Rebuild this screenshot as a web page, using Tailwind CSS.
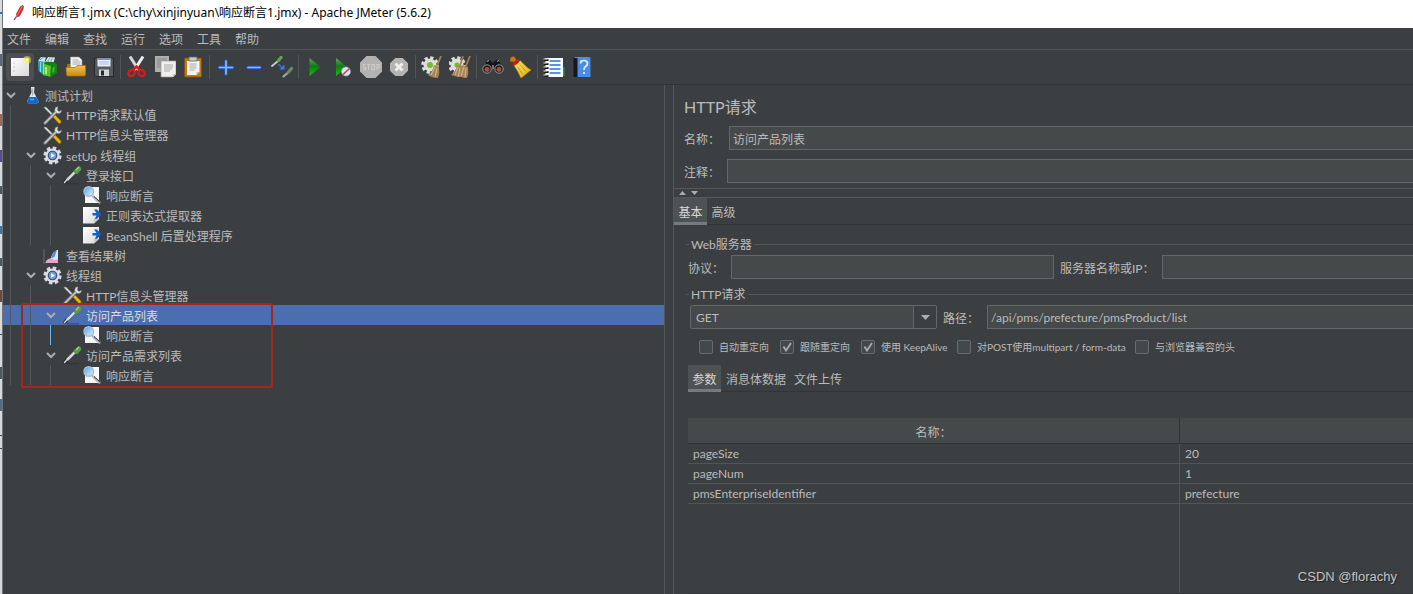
<!DOCTYPE html>
<html lang="zh-CN">
<head>
<meta charset="utf-8">
<meta name="viewport" content="width=device-width, initial-scale=1">
<title>响应断言1.jmx - Apache JMeter (5.6.2)</title>
<script src="https://cdn.jsdelivr.net/npm/@tailwindcss/browser@4"></script>
</head>
<body class="relative flex h-screen overflow-hidden bg-[#3c3f41] font-['Lato','Noto_Sans_CJK_SC',sans-serif] text-xs text-[#bbbbbb]">

<svg width="0" height="0" class="absolute" aria-hidden="true">
  <defs>
    <linearGradient id="gGreen" x1="0" y1="0" x2="0" y2="1"><stop offset="0" stop-color="#5fa860"/><stop offset=".45" stop-color="#0f7a12"/><stop offset="1" stop-color="#10c410"/></linearGradient>
    <linearGradient id="gFolder" x1="0" y1="0" x2="0" y2="1"><stop offset="0" stop-color="#f2c25a"/><stop offset="1" stop-color="#c98a12"/></linearGradient>
    <linearGradient id="gPaper" x1="0" y1="0" x2="1" y2="1"><stop offset="0" stop-color="#ffffff"/><stop offset="1" stop-color="#d9d9d6"/></linearGradient>
    <linearGradient id="gBroom" x1="0" y1="0" x2="1" y2="1"><stop offset="0" stop-color="#fff07a"/><stop offset="1" stop-color="#d9a800"/></linearGradient>
    <linearGradient id="gLens" x1="0" y1="0" x2="1" y2="1"><stop offset="0" stop-color="#4fa0e8"/><stop offset="1" stop-color="#e2f5ff"/></linearGradient>
    <symbol id="chev" viewBox="0 0 10 8"><path d="M1 2l4 4 4-4" fill="none" stroke="#adadad" stroke-width="2"/></symbol>
    <symbol id="flask" viewBox="0 0 20 20"><path d="M8 2h3.500L11 7.500l4.500 9q.5 1.800-1.500 1.800H5.500q-2 0-1.500-1.800L8.500 7.500z" fill="#e4e9ef"/><path d="M6.300 12h6.900l2.300 4.700q.2 1.600-1.500 1.600H5.500q-1.700 0-1.500-1.600z" fill="#0f67d0"/><path d="M7 14.500h4" stroke="#5aa0ee" stroke-width="1.500"/><path d="M9.700 3.500v7" stroke="#9ba6b0"/></symbol>
    <symbol id="tools" viewBox="0 0 20 20"><g transform="translate(0 1)"><path d="M1 1.500l2-.3L10.500 9l-1 1z" fill="#e8e8e8" stroke="#bfbfbf" stroke-width=".5"/><path d="M10 11l2-2 6 6.200q.3 2.300-2 2.300z" fill="#f2b800" stroke="#a87d00" stroke-width=".5"/><path d="M2 17L13 6" stroke="#707272" stroke-width="3.200" stroke-linecap="round"/><path d="M2 17L13 6" stroke="#c9caca" stroke-width="1.600" stroke-linecap="round"/><path d="M15 .8q-3.500.2-3.200 4l2.800 2.700q3.600.3 3.900-3.200l-2.500 1.300-1.800-1.600z" fill="#e1e1e1" stroke="#8c8c8c" stroke-width=".5"/></g></symbol>
    <symbol id="gear" viewBox="0 0 20 20"><g transform="translate(0 1)"><circle cx="9.500" cy="9.500" r="7.600" fill="none" stroke="#d7dade" stroke-width="3" stroke-dasharray="3.500 2.469"/><circle cx="9.500" cy="9.500" r="7" fill="#dcdfe3"/><circle cx="9.500" cy="9.500" r="4.800" fill="#2d4f83"/><circle cx="9.500" cy="9.500" r="3.700" fill="#7298d0"/><path d="M8 7l4 2.500-4 2.500z" fill="#fff"/></g></symbol>
    <symbol id="dropper" viewBox="0 0 20 20"><path d="M4 18.800h12" stroke="#2a2c2d" stroke-width="1" opacity=".6"/><path d="M2 17L12 7" stroke="#25282a" stroke-width="3.400" stroke-linecap="round"/><path d="M1.500 17.500L4 14.800" stroke="#ddd" stroke-width="1.400" stroke-linecap="round"/><path d="M4 15L12 7" stroke="#d3d7d7" stroke-width="2.600"/><path d="M11 5l4 4" stroke="#45763d" stroke-width="2.200"/><path d="M13.300 6.500L16 3.800" stroke="#579a48" stroke-width="4.600" stroke-linecap="round"/><path d="M13 5l3-3" stroke="#9fd48f" stroke-width="1.200"/></symbol>
    <symbol id="assert" viewBox="0 0 20 20"><g transform="translate(0 1)"><path d="M2 1h14v16H2z" fill="#f7f7f7"/><path d="M10 10.500l6.500 6" stroke="#b4b7bb" stroke-width="2.500" stroke-linecap="round"/><path d="M11 10.500l6.500 6" stroke="#32373c" stroke-width="1"/><circle cx="5.800" cy="5.500" r="4.800" fill="url(#gLens)" stroke="#a9bccb" stroke-width="1.400"/></g></symbol>
    <symbol id="post" viewBox="0 0 20 20"><path d="M0 2h16v12l-5 4.500H0z" fill="url(#gPaper)"/><path d="M11 18.500v-5h5z" fill="#c6c8c9"/><path d="M9.500 8h4L11 4.500h3l4.500 4.700-4.500 4.600h-2.200l1.700-3.300h-4z" fill="#1260c4"/></symbol>
    <symbol id="chart" viewBox="0 0 20 20"><g transform="translate(-1 1)"><path d="M2 3v15" stroke="#6b6e70"/><path d="M3.500 17l1.500-3 5-2.500 2 1 4-4v8.500z" fill="#f2a1dc"/><path d="M9 14q0-7 6-10h1v10z" fill="#dceaff"/><path d="M9.500 12q1-6 5.500-8l-2.500 7z" fill="#4c8de8"/><path d="M3.500 17l1.500-3 5-2 2 2 4-1v4z" fill="#ef9eda"/></g></symbol>

    <symbol id="t-new" viewBox="0 0 22 22"><path d="M2 2h18v18H2z" fill="url(#gPaper)"/><path d="M4.500 7h1M4.500 11h1M4.500 15h1" stroke="#999"/><circle cx="18" cy="4" r="4" fill="#fff36b" opacity=".5"/><circle cx="18" cy="4" r="2.400" fill="#f9e94a"/><circle cx="18" cy="4" r="1" fill="#fff"/></symbol>
    <symbol id="t-tpl" viewBox="0 0 22 22"><path d="M1 5l9 1v14l-3-.5L1.500 15z" fill="#2aa3b8"/><path d="M3.500 6v10M6.500 6.500v12" stroke="#8adbe8"/><path d="M1 5l3-4 5 .5L7.500 6z" fill="#cfe3ea"/><path d="M3 4l3-2.500" stroke="#4aa0b8"/><path d="M8 6l3-5 7 .5-1.500 5z" fill="#dbe9ee"/><path d="M11 5l2-3.500M14 5l1.500-3.500" stroke="#5babbf"/><path d="M7 8l2-2.500 8 .5 2.500 3-6 1z" fill="#167c1a"/><path d="M7 8l7 2-.5 11L7 19z" fill="#4fca24"/><path d="M9 11v7" stroke="#c4f2a6" stroke-width="1.500"/><path d="M14 10l3.500-4 2.500 3v8l-6.500 4z" fill="#12860f"/><path d="M15.500 12l2-1.500v5l-2 1.500z" fill="#45b632"/></symbol>
    <symbol id="t-open" viewBox="0 0 22 22"><path d="M2 8h4l1-1h9v12H2z" fill="#a8710d"/><path d="M5.500 1h8.500l3 3v8H5.500z" fill="#f4f4f4" stroke="#999" stroke-width=".6"/><path d="M7.500 4h6M7.500 6h8M7.500 8h8" stroke="#9a9a9a" stroke-width=".8"/><path d="M1 11.500h9l2-2h8.500v9q0 1.500-1.500 1.500H3q-1.500 0-1.500-1.500z" fill="url(#gFolder)" stroke="#aa760c" stroke-width=".7"/></symbol>
    <symbol id="t-save" viewBox="0 0 22 22"><path d="M1.500 2H20l.5 1v17.500H3l-1.500-1.500z" fill="#565b60" stroke="#25282b"/><path d="M4.500 2h13v8.500h-13z" fill="#e7eef6"/><path d="M4.500 2h13v2h-13z" fill="#7893b5"/><path d="M6 6h10M6 8h10" stroke="#a4bcd6" stroke-width=".9"/><path d="M6 13.500h10v6.500H6z" fill="#d2d4d5"/><path d="M8 14.500h3v5H8z" fill="#25282b"/></symbol>
    <symbol id="t-cut" viewBox="0 0 22 22"><path d="M4 .5L12.500 14" stroke="#d8dada" stroke-width="3"/><path d="M17 .5L8.500 14" stroke="#f1f1f1" stroke-width="3"/><path d="M7.500 13.500l3-3 3 3" stroke="#d81b1b" stroke-width="2.600" fill="none"/><ellipse cx="5.500" cy="17" rx="3.400" ry="2.900" fill="none" stroke="#dc1919" stroke-width="2.400" transform="rotate(-35 5.500 17)"/><ellipse cx="15.500" cy="17" rx="3.400" ry="2.900" fill="none" stroke="#dc1919" stroke-width="2.400" transform="rotate(35 15.500 17)"/></symbol>
    <symbol id="t-copy" viewBox="0 0 22 22"><path d="M1 0h14v16H1z" fill="#aeb0b0"/><path d="M3 3h10M3 5h10M3 7h7M3 9h7M3 11h7" stroke="#858787"/><path d="M7 5h15v13l-3 3H7z" fill="#f0f0ee" stroke="#999" stroke-width=".7"/><path d="M10 9h9M10 11h9M10 13h8M10 15h6" stroke="#a8a8a8"/><path d="M19 21v-3h3z" fill="#c8c8c8"/></symbol>
    <symbol id="t-paste" viewBox="0 0 22 22"><rect x="2.500" y="2" width="17" height="19" rx="1" fill="#bd7a16" stroke="#7e4e08" stroke-width=".7"/><path d="M5 5h12.500v11l-3 3H5z" fill="#f3f3f1"/><path d="M7 1h8v4H7z" fill="#c9cbc8" stroke="#666" stroke-width=".8"/><path d="M7.500 8h7M7.500 10h7M7.500 12h7M7.500 14h5" stroke="#aaa"/><path d="M14.500 19v-3h3z" fill="#bbb"/></symbol>
    <symbol id="t-plus" viewBox="0 0 22 22"><path d="M11 5v13M4.500 11.500h13" stroke="#1f61bd" stroke-width="3.400" stroke-linecap="round"/><path d="M11 5v13M4.500 11.500h13" stroke="#8cbcf4" stroke-width="1.600" stroke-linecap="round"/></symbol>
    <symbol id="t-minus" viewBox="0 0 22 22"><path d="M5 11.500h12" stroke="#1f61bd" stroke-width="3.400" stroke-linecap="round"/><path d="M5 11.500h12" stroke="#8cbcf4" stroke-width="1.600" stroke-linecap="round"/></symbol>
    <symbol id="t-toggle" viewBox="0 0 22 22"><path d="M1 10L7 5" stroke="#c9cdcb" stroke-width="1.800" stroke-linecap="round"/><path d="M7.500 4.500l2.500-3" stroke="#5ca84a" stroke-width="3.200" stroke-linecap="round"/><path d="M7 8l4.500 4" stroke="#3473d8" stroke-width="1.600"/><path d="M13.500 8.500v5H8.500z" fill="#3c7ce0"/><path d="M12.500 20.500l4-3.500" stroke="#a3a9a1" stroke-width="2.200" stroke-linecap="round"/><path d="M17.500 16l3-3.500" stroke="#6d8a66" stroke-width="3.200" stroke-linecap="round"/></symbol>
    <symbol id="t-play" viewBox="0 0 22 22"><path d="M5.500 2l11 9-11 9z" fill="url(#gGreen)"/></symbol>
    <symbol id="t-playno" viewBox="0 0 22 22"><path d="M4 2l11 9-11 9z" fill="url(#gGreen)"/><circle cx="14" cy="15.500" r="4.500" fill="#d9e9fb" stroke="#8aa8cc" stroke-width=".6"/><path d="M11 18.500l6.500-6" stroke="#dc3b3b" stroke-width="1.700"/></symbol>
    <symbol id="t-stop" viewBox="0 0 22 22"><path d="M6.500 0h9L22 6.500v9L15.500 22h-9L0 15.500v-9z" fill="#b2b2b2"/><path d="M5.500 8.500H3.300v2.700h2.200v2.600H3M7 8.500h3.500M8.700 8.500v5.500M12 8.500h2.500v5.300H12zM17 14V8.500h2.300v3H17" fill="none" stroke="#cccccc" stroke-width="1.100"/></symbol>
    <symbol id="t-shut" viewBox="0 0 22 22"><path d="M7.300 2h7.400L20 7.300v7.400L14.700 20H7.300L2 14.700V7.300z" fill="#b4b4b4"/><path d="M7.500 7.500l7 7M14.500 7.500l-7 7" stroke="#eeeeee" stroke-width="3"/></symbol>
    <symbol id="t-clear" viewBox="0 0 22 22"><circle cx="9" cy="9" r="7.300" fill="none" stroke="#dcdedb" stroke-width="3" stroke-dasharray="3.200 2.533"/><circle cx="9" cy="9" r="6.500" fill="#dcdedb"/><circle cx="9" cy="9" r="3" fill="#73bd1f"/><path d="M20 0l-4 10" stroke="#a57e50" stroke-width="1.800"/><path d="M13 9l5 2q1 6-1 11-6 0-10-3 5-4 6-10z" fill="#a88358"/><path d="M14 11l-4 8M16 12l-2 9" stroke="#d6bc91"/></symbol>
    <symbol id="t-clearall" viewBox="0 0 22 22"><circle cx="8" cy="9" r="7.300" fill="none" stroke="#dcdedb" stroke-width="3" stroke-dasharray="3.200 2.533"/><circle cx="8" cy="9" r="6.500" fill="#dcdedb"/><circle cx="8" cy="9" r="2.500" fill="#73bd1f"/><path d="M14 0l-3 10M21 0l-4 10" stroke="#a57e50" stroke-width="1.700"/><path d="M8 9l4 1 2-1 5 2q1 6-1 11-4 0-6-1-5 0-10-2 5-4 6-10z" fill="#a88358"/><path d="M9 11l-3 8M11 12l-2 9M15 11l-3 9M17 12l-1 9" stroke="#d6bc91"/></symbol>
    <symbol id="t-find" viewBox="0 0 22 22"><path d="M1 13L5 5q2-2 4 0l2 2 2-2q2-2 4 0l4 8z" fill="#151515"/><path d="M5 5.500l2-1M15 5.500l2-1" stroke="#aaa"/><circle cx="5" cy="13" r="4.200" fill="#202020" stroke="#99958d" stroke-width="1"/><circle cx="17" cy="13" r="4.200" fill="#202020" stroke="#99958d" stroke-width="1"/><circle cx="5" cy="13.500" r="2.400" fill="#a45234"/><circle cx="17" cy="13.500" r="2.400" fill="#a45234"/><path d="M10 9h2v4h-2z" fill="#777"/></symbol>
    <symbol id="t-broom" viewBox="0 0 22 22"><path d="M0 3q1-3 4-2.500L6.500 4l-2 2L0 5.500z" fill="#c97a20" stroke="#965308" stroke-width=".7"/><path d="M4 9.500q4-1 6-5l5 5q3 3 6 4.500L11 22Q8 15 4 9.500z" fill="url(#gBroom)" stroke="#ba9108" stroke-width=".6"/><path d="M3 9L9 3.500" stroke="#d31616" stroke-width="2.600"/><path d="M7.500 10.500l5 8M10 8.500l6 7" stroke="#b98b08" stroke-width=".8"/></symbol>
    <symbol id="t-func" viewBox="0 0 22 22"><path d="M19 11h2.500v4H19z" fill="#1b74e8"/><path d="M19 15h2.500v5H19z" fill="#12a822"/><path d="M2.500 2H20v19H2.500z" fill="#fff"/><path d="M6.500 5h11M6.500 9h11M6.500 13h11M6.500 17h11" stroke="#1e73e8" stroke-width="1.400"/><path d="M1.500 4h4M1.500 8h4M1.500 12h4M1.500 16h4M1.500 20h4" stroke="#151515" stroke-width="2"/><path d="M.5 3h4M.5 7h4M.5 11h4M.5 15h4M.5 19h4" stroke="#e8e8e8" stroke-width="1.200"/></symbol>
    <symbol id="t-help" viewBox="0 0 22 22"><path d="M2.500 1h5v20h-5z" fill="#14171b"/><path d="M2.500 1h17l-2 1h-13z" fill="#788fa5"/><path d="M6.500 1.500h13V21h-13z" fill="#4b8ce4"/><path d="M9.500 7.500q0-3 3.500-3t3.500 3q0 1.700-2 3-1.500 1-1.500 3.500M13 16v2" fill="none" stroke="#e5f0ff" stroke-width="1.700"/></symbol>
  </defs>
</svg>

<!-- Sliver of the window lying behind -->
<div class="flex w-[3px] shrink-0 flex-col border-r border-[#707477] bg-[#d6dadd]" aria-hidden="true">
  <span class="mt-3 h-0.5 bg-[#2f6fd0]"></span>
  <span class="mt-10 h-3 bg-[#5c6a78]"></span>
  <span class="mt-12 h-3 bg-[#9c6a4c]"></span>
  <span class="mt-6 h-3 bg-[#5a4a8c]"></span>
  <span class="mt-6 h-2 bg-[#4a5866]"></span>
  <span class="mt-8 h-2 bg-[#3d78a8]"></span>
  <span class="mt-6 h-2 bg-[#4a5866]"></span>
  <span class="mt-6 h-3 bg-[#6b4a3a]"></span>
  <span class="mt-8 h-px bg-[#34495e]"></span>
  <span class="mt-8 h-3 bg-[#4a5866]"></span>
  <span class="mt-5 h-3 bg-[#4a6e8c]"></span>
  <span class="mt-6 h-px bg-[#34495e]"></span>
  <span class="mt-3 h-px bg-[#34495e]"></span>
</div>

<div class="flex min-w-0 flex-1 flex-col">
  <header class="flex h-7 shrink-0 items-center bg-white pb-0.5 pl-2 text-black">
    <svg class="mr-[5px] size-4" viewBox="0 0 16 16" aria-hidden="true"><path d="M12 0q1.500 1 .5 4L8.500 11.500l-3 .5-.5-3L8.500 2.500Q10 0 12 0z" fill="#c92a3c"/><path d="M11.500 1L5.500 11.500" stroke="#f08a3c" stroke-width="1"/><path d="M5.500 11.500L3 15" stroke="#6a2a70" stroke-width="1.200"/></svg>
    <h1 class="font-['Noto_Sans','Noto_Sans_CJK_SC',sans-serif] whitespace-pre">响应断言1.jmx (C:\chy\xinjinyuan\响应断言1.jmx) - Apache JMeter (5.6.2)</h1>
  </header>

  <nav class="flex h-[22px] shrink-0 items-center gap-3.5 border-b border-[#515557] pt-0.5 pl-1" aria-label="菜单">
    <button>文件</button><button>编辑</button><button>查找</button><button>运行</button><button>选项</button><button>工具</button><button>帮助</button>
  </nav>

  <div class="flex h-[35px] shrink-0 items-center border-b border-[#323537] pl-[3px]" role="toolbar" aria-label="工具栏">
    <button aria-label="新建" class="grid size-7 place-items-center rounded-sm bg-[#4c5052]"><svg class="size-[22px]"><use href="#t-new"/></svg></button>
    <button aria-label="模板" class="grid size-7 place-items-center"><svg class="size-[22px]"><use href="#t-tpl"/></svg></button>
    <button aria-label="打开" class="grid size-7 place-items-center"><svg class="size-[22px]"><use href="#t-open"/></svg></button>
    <button aria-label="保存" class="grid size-7 place-items-center"><svg class="size-[22px]"><use href="#t-save"/></svg></button>
    <span class="mx-0.5 h-6 w-px bg-[#515557]"></span>
    <button aria-label="剪切" class="grid size-7 place-items-center"><svg class="size-[22px]"><use href="#t-cut"/></svg></button>
    <button aria-label="复制" class="grid size-7 place-items-center"><svg class="size-[22px]"><use href="#t-copy"/></svg></button>
    <button aria-label="粘贴" class="grid size-7 place-items-center"><svg class="size-[22px]"><use href="#t-paste"/></svg></button>
    <span class="mx-0.5 h-6 w-px bg-[#515557]"></span>
    <button aria-label="全部展开" class="grid size-7 place-items-center"><svg class="size-[22px]"><use href="#t-plus"/></svg></button>
    <button aria-label="全部折叠" class="grid size-7 place-items-center"><svg class="size-[22px]"><use href="#t-minus"/></svg></button>
    <button aria-label="切换" class="grid size-7 place-items-center"><svg class="size-[22px]"><use href="#t-toggle"/></svg></button>
    <span class="mx-0.5 h-6 w-px bg-[#515557]"></span>
    <button aria-label="启动" class="grid size-7 place-items-center"><svg class="size-[22px]"><use href="#t-play"/></svg></button>
    <button aria-label="无暂停启动" class="grid size-7 place-items-center"><svg class="size-[22px]"><use href="#t-playno"/></svg></button>
    <button aria-label="停止" class="grid size-7 place-items-center"><svg class="size-[22px]"><use href="#t-stop"/></svg></button>
    <button aria-label="关闭" class="grid size-7 place-items-center"><svg class="size-[22px]"><use href="#t-shut"/></svg></button>
    <span class="mx-0.5 h-6 w-px bg-[#515557]"></span>
    <button aria-label="清除" class="grid size-7 place-items-center"><svg class="size-[22px]"><use href="#t-clear"/></svg></button>
    <button aria-label="清除全部" class="grid size-7 place-items-center"><svg class="size-[22px]"><use href="#t-clearall"/></svg></button>
    <span class="mx-0.5 h-6 w-px bg-[#515557]"></span>
    <button aria-label="查找" class="grid size-7 place-items-center"><svg class="size-[22px]"><use href="#t-find"/></svg></button>
    <button aria-label="重置搜索" class="grid size-7 place-items-center"><svg class="size-[22px]"><use href="#t-broom"/></svg></button>
    <span class="mx-0.5 h-6 w-px bg-[#515557]"></span>
    <button aria-label="函数助手" class="grid size-7 place-items-center"><svg class="size-[22px]"><use href="#t-func"/></svg></button>
    <button aria-label="帮助" class="grid size-7 place-items-center"><svg class="size-[22px]"><use href="#t-help"/></svg></button>
  </div>

  <div class="flex min-h-0 flex-1">
    <aside class="relative w-[662px] shrink-0 border-r border-[#55585a]">
      <ul role="tree" aria-label="测试计划">
        <li role="treeitem" class="flex h-5 items-center"><svg class="mr-[7px] ml-[3px] h-2 w-2.5"><use href="#chev"/></svg><svg class="mr-0.5 size-5"><use href="#flask"/></svg><span class="pt-[3px]">测试计划</span></li>
        <li role="treeitem" class="flex h-5 items-center"><i class="mr-3 ml-[7px] h-5 w-px bg-[#55585a]"></i><svg class="mr-[3px] ml-5 size-5"><use href="#tools"/></svg><span class="pt-0.5">HTTP请求默认值</span></li>
        <li role="treeitem" class="flex h-5 items-center"><i class="mr-3 ml-[7px] h-5 w-px bg-[#55585a]"></i><svg class="mr-[3px] ml-5 size-5"><use href="#tools"/></svg><span class="pt-0.5">HTTP信息头管理器</span></li>
        <li role="treeitem" class="flex h-5 items-center"><i class="mr-3 ml-[7px] h-5 w-px bg-[#55585a]"></i><svg class="mr-[7px] ml-[3px] h-2 w-2.5"><use href="#chev"/></svg><svg class="mr-[3px] size-5"><use href="#gear"/></svg><span class="pt-[3px]">setUp 线程组</span></li>
        <li role="treeitem" class="flex h-5 items-center"><i class="mr-3 ml-[7px] h-5 w-px bg-[#55585a]"></i><i class="mr-3 ml-[7px] h-5 w-px bg-[#55585a]"></i><svg class="mr-[7px] ml-[3px] h-2 w-2.5"><use href="#chev"/></svg><svg class="mr-[3px] size-5"><use href="#dropper"/></svg><span class="pt-[3px]">登录接口</span></li>
        <li role="treeitem" class="flex h-5 items-center"><i class="mr-3 ml-[7px] h-5 w-px bg-[#55585a]"></i><i class="mr-3 ml-[7px] h-5 w-px bg-[#55585a]"></i><i class="mr-3 ml-[7px] h-5 w-px bg-[#55585a]"></i><svg class="mr-[3px] ml-5 size-5"><use href="#assert"/></svg><span class="pt-[3px]">响应断言</span></li>
        <li role="treeitem" class="flex h-5 items-center"><i class="mr-3 ml-[7px] h-5 w-px bg-[#55585a]"></i><i class="mr-3 ml-[7px] h-5 w-px bg-[#55585a]"></i><i class="mr-3 ml-[7px] h-5 w-px bg-[#55585a]"></i><svg class="mr-[3px] ml-5 size-5"><use href="#post"/></svg><span class="pt-[3px]">正则表达式提取器</span></li>
        <li role="treeitem" class="flex h-5 items-center"><i class="mr-3 ml-[7px] h-5 w-px bg-[#55585a]"></i><i class="mr-3 ml-[7px] h-5 w-px bg-[#55585a]"></i><i class="mr-3 ml-[7px] h-5 w-px bg-[#55585a]"></i><svg class="mr-[3px] ml-5 size-5"><use href="#post"/></svg><span class="pt-[3px]">BeanShell 后置处理程序</span></li>
        <li role="treeitem" class="flex h-5 items-center"><i class="mr-3 ml-[7px] h-5 w-px bg-[#55585a]"></i><svg class="mr-[3px] ml-5 size-5"><use href="#chart"/></svg><span class="pt-[3px]">查看结果树</span></li>
        <li role="treeitem" class="flex h-5 items-center"><i class="mr-3 ml-[7px] h-5 w-px bg-[#55585a]"></i><svg class="mr-[7px] ml-[3px] h-2 w-2.5"><use href="#chev"/></svg><svg class="mr-[3px] size-5"><use href="#gear"/></svg><span class="pt-[3px]">线程组</span></li>
        <li role="treeitem" class="flex h-5 items-center"><i class="mr-3 ml-[7px] h-5 w-px bg-[#55585a]"></i><i class="mr-3 ml-[7px] h-5 w-px bg-[#55585a]"></i><svg class="mr-[3px] ml-5 size-5"><use href="#tools"/></svg><span class="pt-[3px]">HTTP信息头管理器</span></li>
        <li role="treeitem" aria-selected="true" class="flex h-5 items-center bg-[#4b6eaf] text-[#dddddd]"><i class="mr-3 ml-[7px] h-5 w-px bg-[#55585a]"></i><i class="mr-3 ml-[7px] h-5 w-px bg-[#55585a]"></i><svg class="mr-[7px] ml-[3px] h-2 w-2.5"><use href="#chev"/></svg><svg class="mr-[3px] size-5"><use href="#dropper"/></svg><span class="pt-[3px]">访问产品列表</span></li>
        <li role="treeitem" class="flex h-5 items-center"><i class="mr-3 ml-[7px] h-5 w-px bg-[#55585a]"></i><i class="mr-3 ml-[7px] h-5 w-px bg-[#55585a]"></i><i class="mr-3 ml-[7px] h-5 w-px bg-[#6cb8f5]"></i><svg class="mr-[3px] ml-5 size-5"><use href="#assert"/></svg><span class="pt-[3px]">响应断言</span></li>
        <li role="treeitem" class="flex h-5 items-center"><i class="mr-3 ml-[7px] h-5 w-px bg-[#55585a]"></i><i class="mr-3 ml-[7px] h-5 w-px bg-[#55585a]"></i><svg class="mr-[7px] ml-[3px] h-2 w-2.5"><use href="#chev"/></svg><svg class="mr-[3px] size-5"><use href="#dropper"/></svg><span class="pt-[3px]">访问产品需求列表</span></li>
        <li role="treeitem" class="flex h-5 items-center"><i class="mr-3 ml-[7px] h-5 w-px bg-[#55585a]"></i><i class="mr-3 ml-[7px] h-5 w-px bg-[#55585a]"></i><i class="mr-3 ml-[7px] h-5 w-px bg-[#55585a]"></i><svg class="mr-[3px] ml-5 size-5"><use href="#assert"/></svg><span class="pt-[3px]">响应断言</span></li>
      </ul>
      <!-- Red annotation frame over the tree -->
      <div class="pointer-events-none absolute top-[218px] left-[18px] h-[85px] w-[252px] rounded-xs border-2 border-[#a5261f]"></div>
    </aside>

    <main class="ml-2 flex min-w-0 flex-1 flex-col border-l border-[#55585a]">
      <h2 class="pt-2.5 pl-2.5 text-base leading-6">HTTP请求</h2>
      <div class="mt-[7px] flex h-6 items-center pl-2.5">
        <label for="name" class="w-[45px] shrink-0 pt-[3px]">名称：</label>
        <input id="name" value="访问产品列表" class="h-6 min-w-0 flex-1 border border-r-0 border-[#646767] bg-[#45494a] px-[3px] pt-px">
      </div>
      <div class="mt-[9px] flex h-6 items-center pl-2.5">
        <label for="note" class="w-[43px] shrink-0 pt-[3px]">注释：</label>
        <input id="note" class="h-6 min-w-0 flex-1 border border-r-0 border-[#646767] bg-[#45494a] px-[3px] pt-px">
      </div>
      <div class="mt-[5px] flex h-2.5 shrink-0 items-center gap-[5px] border-y border-[#55585a] pl-[5px]">
        <svg class="h-1 w-[7px]" viewBox="0 0 7 4" aria-hidden="true"><path d="M0 4l3.500-4L7 4z" fill="#adadad"/></svg>
        <svg class="h-1 w-[7px]" viewBox="0 0 7 4" aria-hidden="true"><path d="M0 0l3.500 4L7 0z" fill="#adadad"/></svg>
      </div>
      <div role="tablist" class="flex h-[27px] shrink-0 border-b border-[#323537]">
        <button role="tab" aria-selected="true" class="h-[27px] w-[33px] border-b-3 border-[#747a80] bg-[#4e5254] pt-[5px] text-[#d8d8d8]">基本</button>
        <button role="tab" class="h-[27px] w-[33px] border-b-3 border-transparent pt-[5px]">高级</button>
      </div>

      <section class="pl-3" aria-label="Web服务器">
        <div class="mt-[9px] flex h-5 items-center gap-0.5"><i class="h-px w-[3px] bg-[#55585a]"></i><h3 class="pt-px">Web服务器</h3><i class="h-px flex-1 bg-[#55585a]"></i></div>
        <div class="mt-px flex h-6 items-center pl-0.5">
          <label for="proto" class="w-[43px] shrink-0 pt-[3px]">协议：</label>
          <input id="proto" class="h-6 w-[323px] border border-[#646767] bg-[#45494a] px-[3px] pt-px">
          <label for="host" class="ml-1.5 w-[102px] shrink-0 pt-[3px]">服务器名称或IP：</label>
          <input id="host" class="h-6 min-w-0 flex-1 border border-r-0 border-[#646767] bg-[#45494a] px-[3px] pt-px">
        </div>
      </section>

      <section class="pl-3" aria-label="HTTP请求">
        <div class="mt-[5px] flex h-5 items-center gap-0.5"><i class="h-px w-[3px] bg-[#55585a]"></i><h3 class="pt-px">HTTP请求</h3><i class="h-px flex-1 bg-[#55585a]"></i></div>
        <div class="mt-px flex h-6 items-center pl-1">
          <div class="relative w-[247px]">
            <select aria-label="方法" class="block h-6 w-full appearance-none rounded-xs border border-[#646767] bg-[#45494a] px-[5px] pt-px"><option>GET</option></select>
            <span class="pointer-events-none absolute top-px right-px grid h-[22px] w-[23px] place-items-center border-l border-[#646767] bg-[#3c3f41]"><svg class="h-[5px] w-[9px]" viewBox="0 0 9 5" aria-hidden="true"><path d="M0 0h9L4.500 5z" fill="#adadad"/></svg></span>
          </div>
          <label for="path" class="ml-1.5 w-11 shrink-0 pt-[3px]">路径：</label>
          <input id="path" value="/api/pms/prefecture/pmsProduct/list" class="h-6 min-w-0 flex-1 border border-r-0 border-[#646767] bg-[#45494a] px-[3px] pt-px">
        </div>
        <div class="mt-2.5 flex h-4 items-center pl-[13px] text-[10px] whitespace-nowrap">
          <label class="flex w-[81px] shrink-0 items-center gap-1.5"><input type="checkbox" class="size-3.5 appearance-none rounded-xs border border-[#6b6b6b] bg-[#43494a]"><span class="pt-0.5">自动重定向</span></label>
          <label class="relative flex w-[81px] shrink-0 items-center gap-1.5"><input type="checkbox" checked class="size-3.5 appearance-none rounded-xs border border-[#6b6b6b] bg-[#43494a]"><svg class="absolute left-0 size-3.5" viewBox="0 0 14 14" aria-hidden="true"><path d="M3.500 6.500l2.500 4 5-7.500" fill="none" stroke="#a9a9a9" stroke-width="1.900"/></svg><span class="pt-0.5">跟随重定向</span></label>
          <label class="relative flex w-24 shrink-0 items-center gap-1.5"><input type="checkbox" checked class="size-3.5 appearance-none rounded-xs border border-[#6b6b6b] bg-[#43494a]"><svg class="absolute left-0 size-3.5" viewBox="0 0 14 14" aria-hidden="true"><path d="M3.500 6.500l2.500 4 5-7.500" fill="none" stroke="#a9a9a9" stroke-width="1.900"/></svg><span class="pt-0.5">使用 KeepAlive</span></label>
          <label class="flex w-[178px] shrink-0 items-center gap-1.5"><input type="checkbox" class="size-3.5 appearance-none rounded-xs border border-[#6b6b6b] bg-[#43494a]"><span class="pt-0.5">对POST使用multipart / form-data</span></label>
          <label class="flex shrink-0 items-center gap-1.5"><input type="checkbox" class="size-3.5 appearance-none rounded-xs border border-[#6b6b6b] bg-[#43494a]"><span class="pt-0.5">与浏览器兼容的头</span></label>
        </div>
      </section>

      <div class="mt-2.5 flex min-h-0 flex-1 flex-col pl-3.5">
        <div role="tablist" class="flex h-[27px] shrink-0 gap-1 border-b border-[#323537]">
          <button role="tab" aria-selected="true" class="h-[27px] w-[33px] border-b-3 border-[#747a80] bg-[#4e5254] pt-[5px] text-[#d8d8d8]">参数</button>
          <button role="tab" class="h-[27px] w-[62px] border-b-3 border-transparent pt-[5px]">消息体数据</button>
          <button role="tab" class="h-[27px] w-[54px] border-b-3 border-transparent pt-[5px]">文件上传</button>
        </div>
        <div class="mt-[26px] flex min-h-0 flex-1 flex-col border-b border-[#323537]">
          <table class="w-full table-fixed border-separate border-spacing-0">
            <colgroup><col class="w-[492px]"><col></colgroup>
            <thead><tr class="h-[26px] bg-[#45494a]"><th class="border-r border-b border-[#323537] p-0 pt-[5px] font-normal">名称：</th><th class="border-b border-[#323537] p-0"></th></tr></thead>
            <tbody>
              <tr class="h-5"><td class="border-r border-b border-[#515557] px-[5px]">pageSize</td><td class="border-b border-[#515557] px-[5px]">20</td></tr>
              <tr class="h-5"><td class="border-r border-b border-[#515557] px-[5px]">pageNum</td><td class="border-b border-[#515557] px-[5px]">1</td></tr>
              <tr class="h-5"><td class="border-r border-b border-[#515557] px-[5px]">pmsEnterpriseIdentifier</td><td class="border-b border-[#515557] px-[5px]">prefecture</td></tr>
            </tbody>
          </table>
          <div class="w-[492px] flex-1 border-r border-[#515557]"></div>
        </div>
      </div>
    </main>
  </div>
</div>

<p class="absolute right-4 bottom-[9px] font-['Liberation_Sans',sans-serif] text-[13px] text-[#c4c5c6] [text-shadow:1px_1px_1px_#222]">CSDN @florachy</p>
</body>
</html>
